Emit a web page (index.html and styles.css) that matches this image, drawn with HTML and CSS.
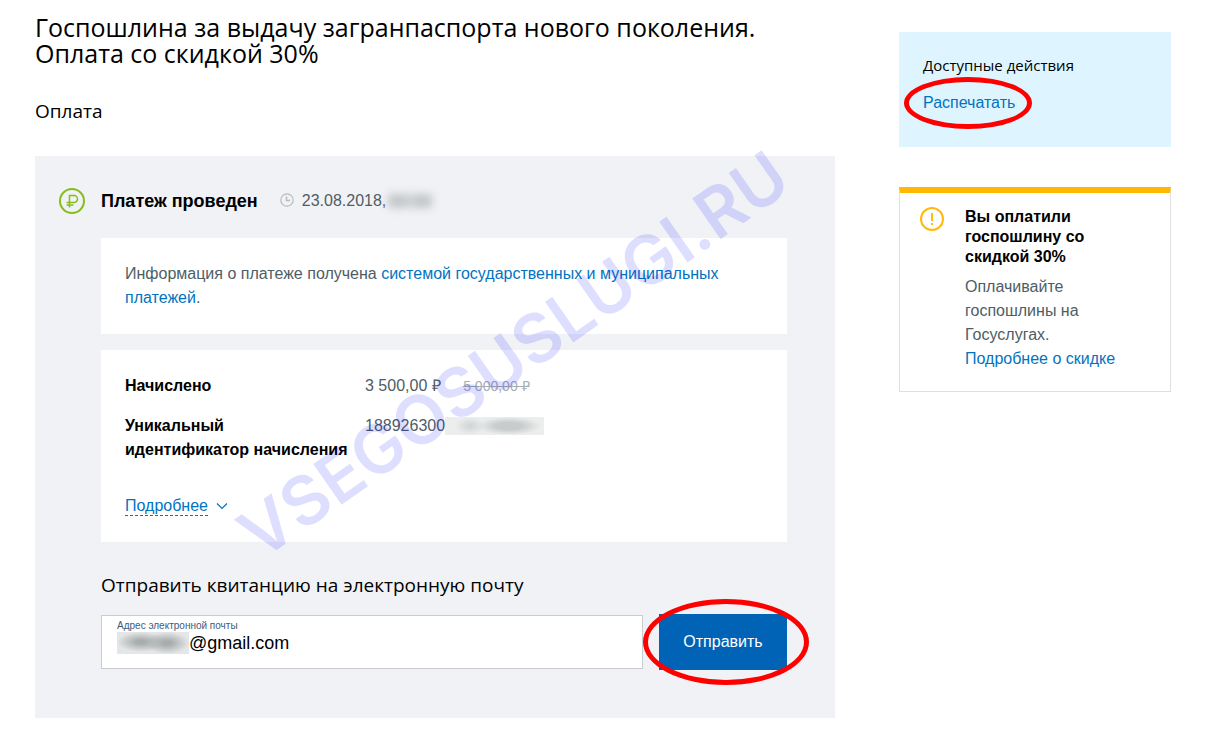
FILE: index.html
```html
<!DOCTYPE html>
<html lang="ru">
<head>
    <meta charset="UTF-8">
    <meta name="viewport" content="width=device-width, initial-scale=1.0">
    <title>Оплата госпошлины</title>
    <link rel="stylesheet" href="styles.css">
</head>
<body>
    <div class="page">
        <main class="main">
            <h1>Госпошлина за выдачу загранпаспорта нового поколения.<br>Оплата со скидкой 30%</h1>
            <h2>Оплата</h2>
            <section class="payment">
                <svg class="status-icon" width="26" height="26" viewBox="0 0 26 26" fill="none" stroke="#86bd1b">
                    <circle cx="13" cy="13" r="12" stroke-width="2"/>
                    <path d="M10.500 19.500V7.500h4.500a3.500 3.500 0 0 1 0 7H7.500M7.500 17h7" stroke-width="1.500"/>
                </svg>
                <div class="content">
                    <div class="status">
                        <strong>Платеж проведен</strong>
                        <svg class="clock" width="14" height="14" viewBox="0 0 14 14" fill="none" stroke="#b9bcbf">
                            <circle cx="7" cy="7" r="6.200" stroke-width="1.200"/>
                            <path d="M6.500 3.500v4H10" stroke-width="1.500"/>
                        </svg>
                        <span>23.08.2018,</span>
                        <span class="hidden-time"></span>
                    </div>
                    <div class="card">
                        Информация о платеже получена <a href="#">системой государственных и муниципальных платежей</a>.
                    </div>
                    <div class="card">
                        <dl class="details">
                            <dt>Начислено</dt>
                            <dd>3 500,00 ₽ <s>5 000,00 ₽</s></dd>
                            <dt>Уникальный идентификатор начисления</dt>
                            <dd class="number">188926300<span class="hidden-number"></span></dd>
                        </dl>
                        <button class="more" type="button">
                            <span>Подробнее</span>
                            <svg width="12" height="8" viewBox="0 0 12 8" fill="none" stroke="#0173c1" stroke-width="1.200">
                                <path d="M1 1.500l5 5 5-5"/>
                            </svg>
                        </button>
                    </div>
                    <h3>Отправить квитанцию на электронную почту</h3>
                    <form class="send">
                        <div class="field">
                            <label for="email">Адрес электронной почты</label>
                            <div class="value">
                                <span class="hidden-name"></span>
                                <input id="email" type="text" value="@gmail.com">
                            </div>
                        </div>
                        <div class="marked">
                            <button class="submit" type="button">Отправить</button>
                            <span class="ring ring-big"></span>
                        </div>
                    </form>
                </div>
                <div class="watermark">VSEGOSUSLUGI.RU</div>
            </section>
        </main>
        <aside class="side">
            <div class="actions">
                <h4>Доступные действия</h4>
                <div class="marked">
                    <a href="#">Распечатать</a>
                    <span class="ring ring-small"></span>
                </div>
            </div>
            <div class="notice">
                <svg width="24" height="24" viewBox="0 0 24 24" fill="none" stroke="#ffb90f" stroke-width="2">
                    <circle cx="12" cy="12" r="11"/>
                    <path d="M12 6v8M12 16v2"/>
                </svg>
                <div>
                    <strong>Вы оплатили госпошлину со скидкой 30%</strong>
                    <p>Оплачивайте госпошлины на Госуслугах. <a href="#">Подробнее о скидке</a></p>
                </div>
            </div>
        </aside>
    </div>
</body>
</html>
```
FILE: styles.css
```css
* {
    box-sizing: border-box;
}
body {
    margin: 0;
    background-color: #fff;
    color: #4e5d66;
    font-family: "Liberation Sans", Arial, sans-serif;
    font-size: 16px;
    line-height: 24px;
}
h1, h2, h3, h4 {
    margin: 0;
    color: #000;
    font-family: "Open Sans", "Noto Sans", sans-serif;
    font-weight: normal;
}
a {
    color: #0173c1;
    text-decoration: none;
}
strong {
    color: #000;
}
.page {
    display: grid;
    grid-template-columns: minmax(0, 1fr) 272px;
    gap: 64px;
    padding: 14px 42px 38px 35px;
}
h1 {
    font-size: 25px;
    line-height: 26px;
}
h2 {
    margin: 32px 0;
    font-size: 19px;
    line-height: 26px;
}

/* payment panel */
.payment {
    position: relative;
    display: flex;
    gap: 16px;
    padding: 32px 48px 48px 24px;
    background-color: #f1f2f6;
}
.status-icon {
    flex: none;
}
.content {
    flex: 1;
    min-width: 0;
}
.status {
    display: flex;
    align-items: center;
    height: 26px;
    margin-bottom: 24px;
}
.status strong {
    font-size: 18px;
}
.clock {
    margin: 0 8px 2px 22px;
}
.card {
    margin-bottom: 16px;
    padding: 24px;
    background-color: #fff;
}
.details {
    display: grid;
    grid-template-columns: 224px 1fr;
    gap: 16px;
    margin: 0 0 32px;
}
.details dt {
    color: #000;
    font-weight: bold;
}
.details dd {
    margin: 0;
}
.details s {
    margin-left: 18px;
    color: #a4adb2;
    font-size: 14px;
}
.number {
    display: flex;
    align-items: center;
    height: 24px;
}
.more {
    display: flex;
    align-items: center;
    gap: 8px;
    height: 24px;
    padding: 0;
    border: none;
    background: none;
    color: #0173c1;
    font: inherit;
    cursor: pointer;
}
.more span {
    line-height: 18px;
    border-bottom: 1px dashed #0173c1;
}
h3 {
    margin: 30px 0 16px;
    font-size: 19px;
    line-height: 26px;
}

/* smudges over private data */
.hidden-time {
    width: 44px;
    height: 14px;
    margin-left: 2px;
    background: linear-gradient(90deg, #c3c7c9 42%, #dcdfe1 50%, #c3c7c9 58%);
    filter: blur(4px);
}
.hidden-number {
    width: 99px;
    height: 18px;
    background:
        radial-gradient(closest-side, #d0d4d4, transparent) 10px 0 / 30px 18px no-repeat,
        radial-gradient(closest-side, #c8cccc 40%, transparent) 32px 0 / 64px 18px no-repeat,
        #eceeee;
}
.hidden-name {
    flex: none;
    width: 72px;
    height: 22px;
    background:
        radial-gradient(closest-side, #a9adae 20%, transparent) 0 0 / 48px 20px no-repeat,
        radial-gradient(closest-side, #a9adae 20%, transparent) 28px 0 / 44px 22px no-repeat,
        #e4e6e7;
}

/* receipt form */
.send {
    display: flex;
    align-items: center;
    gap: 16px;
}
.field {
    flex: 1;
    height: 54px;
    padding: 4px 15px;
    border: 1px solid #c9cdd1;
    background-color: #fff;
}
.field label {
    display: block;
    color: #3f5a78;
    font-size: 10px;
    line-height: 12px;
}
.value {
    display: flex;
    align-items: center;
}
.value input {
    flex: 1;
    min-width: 0;
    height: 20px;
    padding: 0;
    border: none;
    outline: none;
    background: none;
    color: #000;
    font: inherit;
    font-size: 18px;
}
.submit {
    width: 128px;
    height: 56px;
    border: none;
    background-color: #0063b5;
    color: #fff;
    font: inherit;
    cursor: pointer;
}

/* hand-drawn style highlights */
.marked {
    position: relative;
    width: fit-content;
}
.ring {
    position: absolute;
    border: 5px solid #f00;
    border-radius: 50%;
    pointer-events: none;
}
.ring-big {
    inset: -15px -22px -15px -16px;
}
.ring-small {
    inset: -14px -17px -14px -19px;
}
.watermark {
    position: absolute;
    top: 198px;
    left: 478px;
    color: rgba(0, 0, 255, 0.13);
    font-family: Inter, sans-serif;
    font-size: 68px;
    font-weight: 600;
    line-height: 1;
    transform: translate(-50%, -50%) rotate(-35deg);
    pointer-events: none;
}

/* right column */
.side {
    padding-top: 18px;
}
.actions {
    margin-bottom: 40px;
    padding: 23px 24px 32px;
    background-color: #def5ff;
}
h4 {
    margin-bottom: 16px;
    font-size: 15px;
    line-height: 20px;
}
.notice {
    display: flex;
    align-items: flex-start;
    gap: 21px;
    padding: 14px 40px 20px 20px;
    border: 1px solid #dbe1e3;
    border-top: 6px solid #ffb900;
}
.notice svg {
    flex: none;
}
.notice strong {
    display: block;
    line-height: 20px;
}
.notice p {
    margin: 8px 0 0;
}
```
